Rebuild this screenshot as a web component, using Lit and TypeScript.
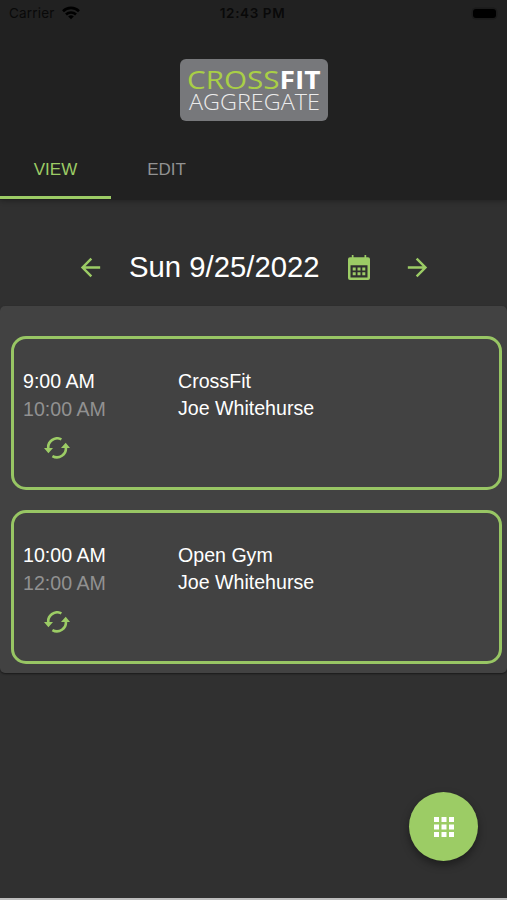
import { LitElement, html, css } from "lit";
import { customElement, property } from "lit/decorators.js";

const GREEN = "#9ccc65";

const wifi = html`<svg width="18" height="14" viewBox="0 0 18 14" fill="none" stroke="#000" stroke-width="2.6">
  <path d="M1 5.2A11.4 11.4 0 0 1 17 5.2"/><path d="M4 8.5A7.2 7.2 0 0 1 14 8.5"/>
  <path d="M9 13.3L6.2 10.6A4 4 0 0 1 11.8 10.6Z" fill="#000" stroke="none"/></svg>`;

const arrowLeft = html`<svg width="29" height="29" viewBox="0 0 24 24" fill=${GREEN}>
  <path d="M20 11H7.83l5.59-5.59L12 4l-8 8 8 8 1.41-1.41L7.83 13H20v-2z"/></svg>`;
const arrowRight = html`<svg width="29" height="29" viewBox="0 0 24 24" fill=${GREEN}>
  <path d="M12 4l-1.41 1.41L16.17 11H4v2h12.17l-5.58 5.59L12 20l8-8z"/></svg>`;

const calendar = html`<svg width="22" height="25" viewBox="0 0 22 25" fill=${GREEN}>
  <path fill-rule="evenodd" d="M3.8 0h1.7v2.3h11V0h1.7v2.3H20a2 2 0 0 1 2 2V23a2 2 0 0 1-2 2H2a2 2 0 0 1-2-2V4.3a2 2 0 0 1 2-2h1.8zM2.5 10.2v12.3h17V10.2z"/>
  <path d="M4.7 12.4h3v3h-3zM9.5 12.4h3v3h-3zM14.3 12.4h3v3h-3zM4.7 17.2h3v3h-3zM9.5 17.2h3v3h-3zM14.3 17.2h3v3h-3z"/></svg>`;

const recurring = html`<svg width="26" height="22" viewBox="0 0 26 22" fill="none" stroke=${GREEN} stroke-width="2.6">
  <path d="M4.4 12A9 9 0 0 1 17.4 2.4"/><path d="M21.8 10A9 9 0 0 1 8.4 19.1"/>
  <path d="M0 11h9L4.4 16.2zM17 11h9L21.7 5.8z" fill=${GREEN} stroke="none"/></svg>`;

const grid = html`<svg width="20" height="20" viewBox="0 0 20 20" fill="#fff">
  <path d="M0 0h5v5H0zM7.5 0h5v5h-5zM15 0h5v5h-5zM0 7.5h5v5H0zM7.5 7.5h5v5h-5zM15 7.5h5v5h-5zM0 15h5v5H0zM7.5 15h5v5h-5zM15 15h5v5h-5z"/></svg>`;

@customElement("class-card")
class ClassCard extends LitElement {
  @property() start = "";
  @property() end = "";
  @property() name = "";
  @property() coach = "";

  static styles = css`
    :host {
      display: grid;
      grid-template-columns: 155px 1fr;
      box-sizing: border-box;
      height: 154px;
      padding: 29px 0 0 9.5px;
      border: 3px solid #98c664;
      border-radius: 15px;
      color: #fff;
      font-size: 19.6px;
      line-height: 27px;
    }
    .end { color: #919191; line-height: 29px; }
    .repeat { display: flex; padding: 13px 0 0 21px; }
  `;

  render() {
    return html`
      <div>
        <div>${this.start}</div>
        <div class="end">${this.end}</div>
        <div class="repeat">${recurring}</div>
      </div>
      <div>
        <div>${this.name}</div>
        <div>${this.coach}</div>
      </div>
    `;
  }
}

@customElement("app-root")
class AppRoot extends LitElement {
  static styles = css`
    :host {
      display: flex;
      flex-direction: column;
      position: relative;
      box-sizing: border-box;
      height: 900px;
      overflow: hidden;
      background: #303030;
      border-bottom: 2px solid #bdbdbd;
      font-family: "Liberation Sans", Arial, sans-serif;
    }
    header {
      height: 200px;
      background: #212121;
      box-shadow: 0 1px 5px rgba(0, 0, 0, 0.3);
      display: flex;
      flex-direction: column;
    }
    .status {
      display: grid;
      grid-template-columns: 1fr auto 1fr;
      align-items: center;
      height: 27px;
      padding: 0 11px 0 9px;
      box-sizing: border-box;
      font: 13.5px/27px Inter, sans-serif;
      color: #090909;
    }
    .carrier { display: flex; align-items: center; gap: 7px; letter-spacing: 0.2px; }
    .carrier svg { margin-top: -1px; }
    .clock { font-weight: 600; font-size: 13.5px; letter-spacing: 0.6px; }
    .battery {
      justify-self: end;
      width: 23px;
      height: 9px;
      border-radius: 3px;
      background: #000;
      box-shadow: 0 0 0 1.5px #1b1b1b;
    }
    .logo { display: block; margin: 32px 0 0 180px; }
    .word { font-family: "Open Sans", "Noto Sans", sans-serif; }
    .tabs { display: flex; margin-top: auto; padding-bottom: 1px; }
    .tab {
      box-sizing: border-box;
      width: 111px;
      height: 60px;
      text-align: center;
      font-size: 17px;
      line-height: 61px;
      color: #929292;
      border-bottom: 3px solid transparent;
    }
    .active { color: #9ccc65; border-color: #9ccc65; }
    .date {
      display: flex;
      align-items: center;
      height: 106px;
      padding: 28px 0 0 75.5px;
      box-sizing: border-box;
      color: #fff;
      font-size: 29.3px;
    }
    .label { width: 192px; margin: 0 26.5px 0 24.5px; white-space: nowrap; }
    .next { display: flex; margin-left: 33px; }
    .prev, .cal { display: flex; }
    .panel {
      display: flex;
      flex-direction: column;
      gap: 19.5px;
      box-sizing: border-box;
      height: 367px;
      padding: 30px 5px 0 10.5px;
      background: #424242;
      border-radius: 5px;
      box-shadow: 0 1px 2px rgba(0, 0, 0, 0.5);
    }
    .fab {
      position: absolute;
      right: 29px;
      bottom: 37px;
      width: 69px;
      height: 69px;
      padding: 0;
      border: 0;
      border-radius: 50%;
      background: #9ccc65;
      display: flex;
      align-items: center;
      justify-content: center;
      box-shadow: 0 4px 8px rgba(0, 0, 0, 0.4);
    }
  `;

  render() {
    return html`
      <header>
        <div class="status">
          <span class="carrier">Carrier ${wifi}</span>
          <span class="clock">12:43 PM</span>
          <span class="battery"></span>
        </div>
        <svg class="logo" width="148" height="62" viewBox="0 0 148 62">
          <rect width="148" height="62" rx="6" fill="#77787b" />
          <g class="word">
            <text x="7" y="29.5" font-size="25" font-weight="500" fill="#a9cf46" textLength="92.5" lengthAdjust="spacingAndGlyphs">CROSS</text>
            <text x="99.5" y="29.5" font-size="25" font-weight="700" fill="#fff" textLength="41" lengthAdjust="spacingAndGlyphs">FIT</text>
            <text x="9" y="50.5" font-size="21.5" font-weight="350" fill="#ececec" textLength="131" lengthAdjust="spacingAndGlyphs">AGGREGATE</text>
          </g>
        </svg>
        <nav class="tabs">
          <div class="tab active">VIEW</div>
          <div class="tab">EDIT</div>
        </nav>
      </header>
      <div class="date">
        <span class="prev">${arrowLeft}</span>
        <span class="label">Sun 9/25/2022</span>
        <span class="cal">${calendar}</span>
        <span class="next">${arrowRight}</span>
      </div>
      <main class="panel">
        <class-card start="9:00 AM" end="10:00 AM" name="CrossFit" coach="Joe Whitehurse"></class-card>
        <class-card start="10:00 AM" end="12:00 AM" name="Open Gym" coach="Joe Whitehurse"></class-card>
      </main>
      <button class="fab" aria-label="Menu">${grid}</button>
    `;
  }
}
